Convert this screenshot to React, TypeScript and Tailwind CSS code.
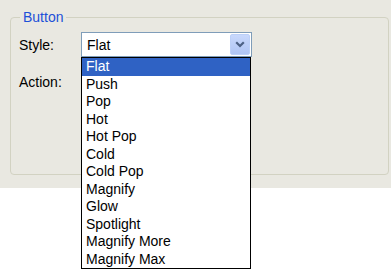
import React from "react";

const items = [
  "Flat",
  "Push",
  "Pop",
  "Hot",
  "Hot Pop",
  "Cold",
  "Cold Pop",
  "Magnify",
  "Glow",
  "Spotlight",
  "Magnify More",
  "Magnify Max",
];

export default function App() {
  return (
    <div
      className="relative w-[391px] h-[276px] bg-white text-[14px] text-black overflow-hidden"
      style={{ fontFamily: '"Liberation Sans", Arial, sans-serif' }}
    >
      <div className="h-[188px] bg-[#e9e8e1] pt-[17px] pl-[10px]">
        <div className="relative w-[379px] h-[158px] border border-[#d2d2c2] rounded-[4px] pl-[8px] pt-[14px]">
          <div className="absolute left-[9px] top-[-9px] px-[3px] bg-[#e9e8e1] text-[#1d50d8] leading-[16px]">
            Button
          </div>
          <div className="flex items-center h-[25px]">
            <div className="w-[62px] leading-[16px]">Style:</div>
            <div className="relative w-[171px] h-[25px] bg-white border border-[#7f9db9] flex items-center pl-[5px]">
              <span className="leading-[16px]">Flat</span>
              <div className="absolute right-[1px] top-[1px] w-[20px] h-[21px] rounded-[2px] border border-[#bcd0f8] bg-gradient-to-b from-[#c8d8fc] to-[#b0c5f4] flex items-center justify-center">
                <svg width="10" height="7" viewBox="0 0 10 7">
                  <path d="M1.2 1.2 L5 5 L8.8 1.2" stroke="#4d6185" strokeWidth="2.2" fill="none" />
                </svg>
              </div>
            </div>
          </div>
          <div className="flex items-center h-[25px] mt-[12px]">
            <div className="w-[62px] leading-[16px]">Action:</div>
          </div>
        </div>
      </div>
      <div className="absolute left-[81px] top-[57px] w-[170px] border border-black bg-white">
        {items.map((it, i) => (
          <div
            key={it}
            className={
              "h-[17.5px] leading-[17.5px] pl-[4px] whitespace-nowrap " +
              (i === 0 ? "bg-[#2f62c4] text-white" : "")
            }
          >
            {it}
          </div>
        ))}
      </div>
    </div>
  );
}
